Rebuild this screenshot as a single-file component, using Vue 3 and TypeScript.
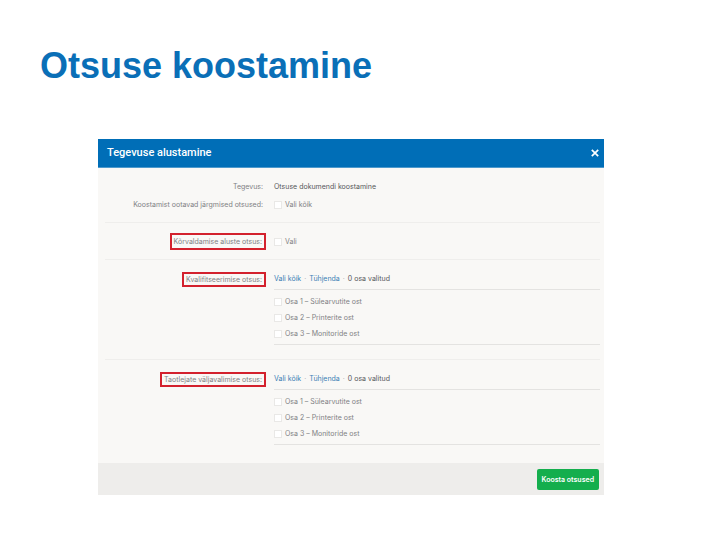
<script setup lang="ts">
import { reactive, ref } from 'vue'

interface Group {
  id: string
  title: string
  selected: number[]
}

const parts: string[] = ['Sülearvutite ost', 'Printerite ost', 'Monitoride ost']

const groups = reactive<Group[]>([
  { id: 'kval', title: 'Kvalifitseerimise otsus:', selected: [] },
  { id: 'taot', title: 'Taotlejate väljavalimise otsus:', selected: [] },
])

const all = ref(false)
const exclusion = ref(false)

function selectAll(group: Group): void {
  group.selected = parts.map((_, i) => i)
}

function clear(group: Group): void {
  group.selected = []
}
</script>

<template>
  <main class="slide">
    <h1>Otsuse koostamine</h1>

    <section class="dialog" role="dialog" aria-labelledby="dialog-title">
      <header class="dialog-head">
        <h2 id="dialog-title">Tegevuse alustamine</h2>
        <button class="close" type="button" aria-label="Sulge">
          <svg viewBox="0 0 8 8" width="8" height="8" aria-hidden="true">
            <path d="M0.8 0.8 L7.2 7.2 M7.2 0.8 L0.8 7.2" stroke="currentColor" stroke-width="1.7" fill="none" />
          </svg>
        </button>
      </header>

      <div class="dialog-body">
        <div class="block intro">
          <div class="row">
            <span class="name">Tegevus:</span>
            <span class="strong">Otsuse dokumendi koostamine</span>
          </div>
          <div class="row">
            <span class="name">Koostamist ootavad järgmised otsused:</span>
            <label class="check"><input v-model="all" type="checkbox" />Vali kõik</label>
          </div>
        </div>

        <div class="block single">
          <div class="row">
            <span class="name marked roomy">Kõrvaldamise aluste otsus:</span>
            <label class="check"><input v-model="exclusion" type="checkbox" />Vali</label>
          </div>
        </div>

        <div v-for="group in groups" :key="group.id" class="block group">
          <div class="row">
            <span class="name marked">{{ group.title }}</span>
            <div class="tools">
              <a href="#" @click.prevent="selectAll(group)">Vali kõik</a>
              <span class="dot">·</span>
              <a href="#" @click.prevent="clear(group)">Tühjenda</a>
              <span class="dot">·</span>
              <span class="strong">{{ group.selected.length }} osa valitud</span>
            </div>
          </div>
          <div class="row">
            <ul class="parts">
              <li v-for="(part, i) in parts" :key="part">
                <label class="check">
                  <input v-model="group.selected" type="checkbox" :value="i" />Osa {{ i + 1 }} – {{ part }}
                </label>
              </li>
            </ul>
          </div>
        </div>
      </div>

      <footer class="dialog-foot">
        <button class="submit" type="button">Koosta otsused</button>
      </footer>
    </section>
  </main>
</template>

<style>
body {
  margin: 0;
  background: #fff;
}
</style>

<style scoped>
.slide {
  padding: 46px 105px 44px 98px;
}

h1 {
  margin: 0 0 53px -58px;
  font: bold 36px/40px 'Liberation Sans', Arial, sans-serif;
  color: #0a6fb7;
}

.dialog {
  font: 7px/16px Inter, Roboto, sans-serif;
  color: #7f8184;
  background: #f9f8f6;
}

.dialog-head {
  display: flex;
  align-items: center;
  justify-content: space-between;
  height: 28px;
  padding: 0 5px 0 9px;
  color: #fff;
  background: #006eb7;
  border-bottom: 1px solid #4d99cc;
}

h2 {
  margin: 0;
  font-family: Roboto, sans-serif;
  font-size: 11px;
  font-weight: 500;
}

.close {
  display: flex;
  padding: 0;
  color: inherit;
  background: none;
  border: 0;
}

.dialog-body {
  padding: 0 4px 0 7px;
}

.block + .block {
  border-top: 1px solid #efeeec;
}

.intro {
  display: grid;
  gap: 2px;
  padding: 11px 0 9px;
}

.single {
  padding: 10px 0 9px;
}

.group {
  padding: 11px 0 14px;
}

.row {
  display: grid;
  grid-template-columns: 161px 1fr;
  column-gap: 8px;
  align-items: center;
}

.name {
  justify-self: end;
  padding: 0 3px;
  white-space: nowrap;
}

.marked {
  padding: 0 2px;
  line-height: 11px;
  border: 2px solid #d3212d;
}

.roomy {
  line-height: 13px;
}

.strong {
  color: #55575a;
}

.check {
  display: flex;
  align-items: center;
  gap: 3px;
}

.check input {
  appearance: none;
  width: 8px;
  height: 8px;
  margin: 0;
  background: #fff;
  border: 1px solid #e9e8e6;
}

.check input:checked {
  background: #006eb7;
}

.tools {
  display: flex;
  gap: 3px;
}

.dot {
  color: #b4b5b6;
}

a {
  color: #3b7fb5;
  text-decoration: none;
}

.parts {
  grid-column: 2;
  margin: 2px 0 0;
  padding: 4px 0 2px;
  list-style: none;
  border: solid #e4e3e1;
  border-width: 1px 0;
}

.dialog-foot {
  display: flex;
  justify-content: flex-end;
  margin-top: 4px;
  padding: 6px 5px 5px;
  background: #eeedeb;
}

.submit {
  height: 21px;
  padding: 0 5px;
  font: 600 7px/21px Inter, Roboto, sans-serif;
  color: #fff;
  background: #14ae4d;
  border: 0;
  border-radius: 2px;
}
</style>
